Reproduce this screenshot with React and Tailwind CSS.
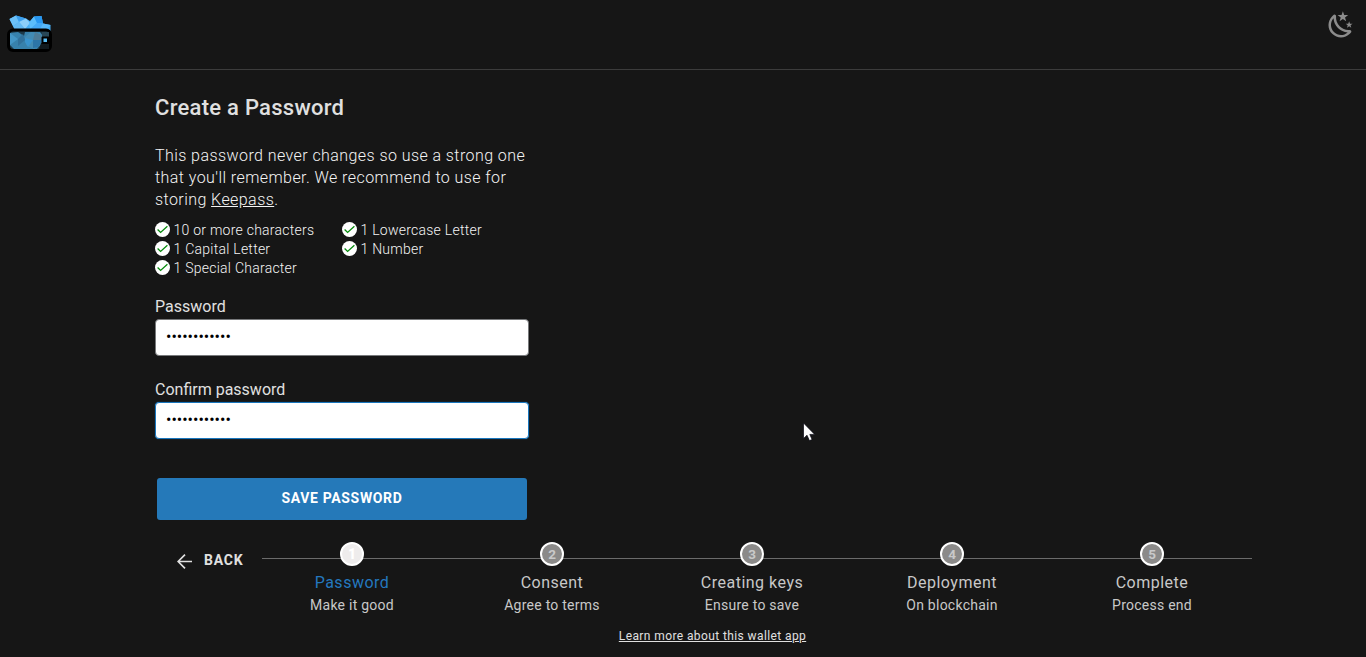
import React from "react";

const rules = [
  "10 or more characters",
  "1 Lowercase Letter",
  "1 Capital Letter",
  "1 Number",
  "1 Special Character",
];

const steps = [
  { title: "Password", note: "Make it good" },
  { title: "Consent", note: "Agree to terms" },
  { title: "Creating keys", note: "Ensure to save" },
  { title: "Deployment", note: "On blockchain" },
  { title: "Complete", note: "Process end" },
];

function Logo() {
  return (
    <svg className="block h-[39px] w-[46px]" viewBox="0 0 46 39">
      <path d="m2.5 5 6.5-3.5 10 3 4 2.5 4-4.5 7.5-.5 1.5 7.5 7.5 1.5V17H8L6 12Z" fill="#45aef5" />
      <path d="m2.5 5 6.5-3.5 3 6.5-6 4Z" fill="#6cc1f8" />
      <path d="m9 1.5 10 3L12 8Z" fill="#3b9fee" />
      <path d="m12 8 7-3.5L23 9l-5 6Z" fill="#8ccff9" />
      <path d="m6 12 6-4 6 7H8Z" fill="#62b9f2" />
      <path d="m22 9 5-6.5 3 6.5-7 6Z" fill="#5cbdfb" />
      <path d="m27 2.500 7.500-.5 1.500 7.500-6-.5Z" fill="#2897f0" />
      <path d="m30 9 6 .5L33 15H24Z" fill="#45a9f6" />
      <path d="m36 9.500 7.500 1.500-4 4H33Z" fill="#58b8fb" />
      <rect x="1.500" y="16" width="42" height="20.500" rx="4.500" fill="#1c3949" stroke="#000" strokeWidth="3" />
      <path d="m3 19 8-1 6 4 1-4h15l3 4-2 8-4 5H7l-4-4Z" fill="#3781ac" />
      <path d="m3 19 8 6-8 6Z" fill="#4395c5" />
      <path d="m11 25 5-5 2 6-7 6Z" fill="#31719b" />
      <path d="m18 23 6-5 9 1 3 4-2 8-7 4-7-3-2-4Z" fill="#428bb4" />
      <path d="m18 24 8 2-5 7-3-5Z" fill="#3993cd" />
      <path d="m26 26 2-8 6 3 1 5Z" fill="#4d7c98" />
      <path d="m26 26 9 0-3 7-6 1Z" fill="#2c75a8" />
      <path d="M35 18h7v5h-7Z" fill="#284757" />
      <path d="M34 29h8v6H32Z" fill="#111a1f" />
      <rect x="34.500" y="22.500" width="8" height="7.500" rx="1" fill="#000" />
      <rect x="36.500" y="24.500" width="3.500" height="3.500" fill="#58bdf5" />
    </svg>
  );
}

function MoonIcon() {
  return (
    <svg className="block h-[30px] w-[30px]" viewBox="0 0 24 24" fill="#8c8c8c">
      <path d="m17.75 4.09-2.53 1.94.91 3.06-2.63-1.81-2.63 1.81.91-3.06-2.53-1.94L12.44 4l1.06-3 1.06 3 3.19.09m3.5 6.91-1.64 1.25.59 1.98-1.7-1.17-1.7 1.17.59-1.98L15.75 11l2.06-.05L18.5 9l.69 1.95 2.06.05m-2.28 4.95c.83-.08 1.72 1.1 1.19 1.85-.32.45-.66.87-1.08 1.27C15.17 23 8.84 23 4.94 19.07c-3.91-3.9-3.91-10.24 0-14.14.4-.4.82-.76 1.27-1.08.75-.53 1.93.36 1.85 1.19-.27 2.86.69 5.83 2.89 8.02a9.96 9.96 0 0 0 8.02 2.89m-1.64 2.02a12.08 12.08 0 0 1-7.8-3.47c-2.17-2.19-3.33-5-3.49-7.82-2.81 3.14-2.7 7.96.31 10.98 3.02 3.01 7.84 3.12 10.98.31Z" />
    </svg>
  );
}

function Rule({ children }) {
  return (
    <li className="flex h-[19px] items-center gap-[3.5px]">
      <svg className="h-[15px] w-[15px] shrink-0" viewBox="0 0 15 15">
        <circle cx="7.5" cy="7.5" r="7.5" fill="#fff" />
        <path d="m2.6 7.6 3 2.8 6.8-6.2" fill="none" stroke="#068a0c" strokeWidth="1.3" />
      </svg>
      <span className="pt-px">{children}</span>
    </li>
  );
}

function Field({ label, id, active }) {
  return (
    <div className="flex flex-col">
      <label htmlFor={id} className="h-6 text-base leading-[26px]">{label}</label>
      <input
        id={id}
        type="password"
        defaultValue="abcdefghij12"
        className={
          active
            ? "mt-px h-[37px] w-[374px] rounded-[4px] border border-[#1976bd] bg-white pr-3 pb-[3px] pl-[10px] text-base text-black shadow-[0_0_1px_#1976bd] outline-none"
            : "mt-px h-[37px] w-[374px] rounded-[4px] border border-[#77797b] bg-white pr-3 pb-[3px] pl-[10px] text-base text-black outline-none"
        }
      />
    </div>
  );
}

function Step({ number, title, note, active }) {
  return (
    <li className="flex w-[200px] flex-col items-center">
      <span
        className={
          active
            ? "flex h-6 w-6 items-center justify-center rounded-full border-2 border-white bg-[#eeecec] text-[14px] font-black text-white"
            : "flex h-6 w-6 items-center justify-center rounded-full border-2 border-white bg-[#8b8a89] text-[13.5px] font-bold text-[#c9c9c9]"
        }
      >
        {number}
      </span>
      <span
        className={
          active
            ? "mt-[5px] text-base leading-6 tracking-[0.5px] text-[#2478bf]"
            : "mt-[5px] text-base leading-6 tracking-[0.5px] text-[#c8c8c8]"
        }
      >
        {title}
      </span>
      <span className="-mt-px text-[14px] leading-[22px] tracking-[0.25px] text-[#c8c8c8]">{note}</span>
    </li>
  );
}

export default function App() {
  return (
    <div className="relative flex h-[657px] w-[1366px] flex-col overflow-hidden bg-[#161616] font-['Roboto',sans-serif] text-[#e0e0e0]">
      <header className="flex h-[70px] shrink-0 items-start justify-between border-b border-[#3c3c3c] pt-[10px] pr-[10px] pl-[7px]">
        <div className="pt-1"><Logo /></div>
        <MoonIcon />
      </header>

      <main className="ml-[155px] flex h-[470px] w-[374px] shrink-0 flex-col">
        <h1 className="mt-[22px] text-[22px] leading-8 font-medium tracking-[0.27px]">Create a Password</h1>
        <p className="mt-[21px] text-base leading-[22px] font-light tracking-[0.43px] whitespace-nowrap text-[#f4f4f4]">
          This password never changes so use a strong one
          <br />
          that you'll remember. We recommend to use for
          <br />
          storing <span className="underline">Keepass</span>.
        </p>
        <ul className="mt-[9px] grid grid-cols-[187px_187px] text-[14px] leading-[19px] font-light tracking-[0.25px] text-[#f4f4f4]">
          {rules.map((rule) => (
            <Rule key={rule}>{rule}</Rule>
          ))}
        </ul>
        <div className="mt-[17px] flex flex-col gap-[21px]">
          <Field id="password" label="Password" />
          <Field id="confirm" label="Confirm password" active />
        </div>
        <button className="mx-[2px] mt-[39px] h-[42px] shrink-0 rounded-[3px] bg-[#2579b9] pb-[2px] text-[14px] font-bold tracking-[0.65px] text-white">
          SAVE PASSWORD
        </button>
      </main>

      <nav className="flex h-[78px] shrink-0 pt-[2px] pl-[177px]">
        <button className="flex h-9 w-[85px] items-center text-[14px] font-bold tracking-[0.75px]">
          <svg className="mt-[3px] mr-3 h-[15px] w-[15px]" viewBox="0 0 15 15" fill="none" stroke="#e0e0e0" strokeWidth="1.7">
            <path d="M15 7.5H1.2M8 .6 1.1 7.5 8 14.4" />
          </svg>
          BACK
        </button>
        <div className="grid w-[990px]">
          <div className="col-start-1 row-start-1 mt-4 h-px bg-[#6b6b6b]" />
          <ol className="z-10 col-start-1 row-start-1 -ml-[10px] flex w-[1000px]">
            {steps.map((step, index) => (
              <Step key={step.title} number={index + 1} title={step.title} note={step.note} active={index === 0} />
            ))}
          </ol>
        </div>
      </nav>

      <footer className="flex justify-center pt-[10px] pl-[59px] text-[12px] leading-4 tracking-[0.4px]">
        <span className="underline">Learn more about this wallet app</span>
      </footer>

      <svg className="absolute top-[422px] left-[803px] h-5 w-3" viewBox="0 0 12 20">
        <path d="M.5 1v15.500l3.500-3.300 2.400 5.400 2.700-1-2.300-5.200h4.900Z" fill="#fff" stroke="#080914" strokeWidth=".7" />
      </svg>
    </div>
  );
}
